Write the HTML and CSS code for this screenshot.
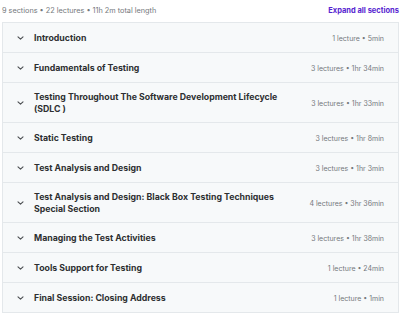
FILE: index.html
```html
<!DOCTYPE html>
<html lang="en">
<head>
  <meta charset="UTF-8">
  <meta name="viewport" content="width=device-width, initial-scale=1.0">
  <title>Course content</title>
  <link rel="stylesheet" href="styles.css">
</head>
<body>

<div class="curriculum">
  <div class="curriculum-bar">
    <span class="summary">9 sections • 22 lectures • 11h 2m total length</span>
    <button class="expand-all">Expand all sections</button>
  </div>

  <div class="section-list">
    <!-- Abschnitte -->
    <div class="section">
      <span class="chevron"><svg width="7" height="4" viewBox="0 0 7 4"><path d="M1 0.8l2.5 2.4 2.5-2.4" fill="none" stroke="#4a4d50" stroke-width="1.1" stroke-linecap="round" stroke-linejoin="round"/></svg></span>
      <span class="section-title">Introduction</span>
      <span class="section-meta">1 lecture • 5min</span>
    </div>
    <div class="section">
      <span class="chevron"><svg width="7" height="4" viewBox="0 0 7 4"><path d="M1 0.8l2.5 2.4 2.5-2.4" fill="none" stroke="#4a4d50" stroke-width="1.1" stroke-linecap="round" stroke-linejoin="round"/></svg></span>
      <span class="section-title">Fundamentals of Testing</span>
      <span class="section-meta">3 lectures • 1hr 34min</span>
    </div>
    <div class="section">
      <span class="chevron"><svg width="7" height="4" viewBox="0 0 7 4"><path d="M1 0.8l2.5 2.4 2.5-2.4" fill="none" stroke="#4a4d50" stroke-width="1.1" stroke-linecap="round" stroke-linejoin="round"/></svg></span>
      <span class="section-title">Testing Throughout The Software Development Lifecycle (SDLC )</span>
      <span class="section-meta">3 lectures • 1hr 33min</span>
    </div>
    <div class="section">
      <span class="chevron"><svg width="7" height="4" viewBox="0 0 7 4"><path d="M1 0.8l2.5 2.4 2.5-2.4" fill="none" stroke="#4a4d50" stroke-width="1.1" stroke-linecap="round" stroke-linejoin="round"/></svg></span>
      <span class="section-title">Static Testing</span>
      <span class="section-meta">3 lectures • 1hr 8min</span>
    </div>
    <div class="section">
      <span class="chevron"><svg width="7" height="4" viewBox="0 0 7 4"><path d="M1 0.8l2.5 2.4 2.5-2.4" fill="none" stroke="#4a4d50" stroke-width="1.1" stroke-linecap="round" stroke-linejoin="round"/></svg></span>
      <span class="section-title">Test Analysis and Design</span>
      <span class="section-meta">3 lectures • 1hr 3min</span>
    </div>
    <div class="section">
      <span class="chevron"><svg width="7" height="4" viewBox="0 0 7 4"><path d="M1 0.8l2.5 2.4 2.5-2.4" fill="none" stroke="#4a4d50" stroke-width="1.1" stroke-linecap="round" stroke-linejoin="round"/></svg></span>
      <span class="section-title">Test Analysis and Design: Black Box Testing Techniques Special Section</span>
      <span class="section-meta">4 lectures • 3hr 36min</span>
    </div>
    <div class="section">
      <span class="chevron"><svg width="7" height="4" viewBox="0 0 7 4"><path d="M1 0.8l2.5 2.4 2.5-2.4" fill="none" stroke="#4a4d50" stroke-width="1.1" stroke-linecap="round" stroke-linejoin="round"/></svg></span>
      <span class="section-title">Managing the Test Activities</span>
      <span class="section-meta">3 lectures • 1hr 38min</span>
    </div>
    <div class="section">
      <span class="chevron"><svg width="7" height="4" viewBox="0 0 7 4"><path d="M1 0.8l2.5 2.4 2.5-2.4" fill="none" stroke="#4a4d50" stroke-width="1.1" stroke-linecap="round" stroke-linejoin="round"/></svg></span>
      <span class="section-title">Tools Support for Testing</span>
      <span class="section-meta">1 lecture • 24min</span>
    </div>
    <div class="section">
      <span class="chevron"><svg width="7" height="4" viewBox="0 0 7 4"><path d="M1 0.8l2.5 2.4 2.5-2.4" fill="none" stroke="#4a4d50" stroke-width="1.1" stroke-linecap="round" stroke-linejoin="round"/></svg></span>
      <span class="section-title">Final Session: Closing Address</span>
      <span class="section-meta">1 lecture • 1min</span>
    </div>
  </div>
</div>

</body>
</html>
```

FILE: styles.css
```css
:root {
  --text-dark: #2d2f31;
  --text-muted: #74787c;
  --accent: #5624d0;
  --row-bg: #f7f9fa;
  --border: #e4e8eb;
}

* {
  margin: 0;
  padding: 0;
  box-sizing: border-box;
}

body {
  font-family: Inter, 'Noto Sans', Arial, sans-serif;
  background: #ffffff;
  color: var(--text-dark);
}

.curriculum {
  margin-left: 2px;
  width: 397px;
}

.curriculum-bar {
  height: 22px;
  display: flex;
  align-items: center;
  justify-content: space-between;
  padding-bottom: 1px;
}

.summary {
  font-size: 7.3px;
  color: var(--text-muted);
}

.expand-all {
  background: none;
  border: none;
  font-family: inherit;
  font-size: 7.5px;
  font-weight: 700;
  color: var(--accent);
  cursor: pointer;
}

.section-list {
  border: 1px solid var(--border);
  border-bottom: none;
}

.section {
  display: flex;
  align-items: center;
  padding: 8px 14px 7px 11px;
  background: var(--row-bg);
  border-bottom: 1px solid var(--border);
}

.chevron {
  width: 12px;
  height: 14px;
  display: flex;
  align-items: center;
  justify-content: center;
  margin-right: 8px;
}

.section-title {
  flex: 1;
  font-size: 8.75px;
  font-weight: 700;
  line-height: 12px;
  max-width: 255px;
}

.section-meta {
  margin-left: auto;
  padding-left: 20px;
  font-size: 7px;
  color: var(--text-muted);
  white-space: nowrap;
}
```
